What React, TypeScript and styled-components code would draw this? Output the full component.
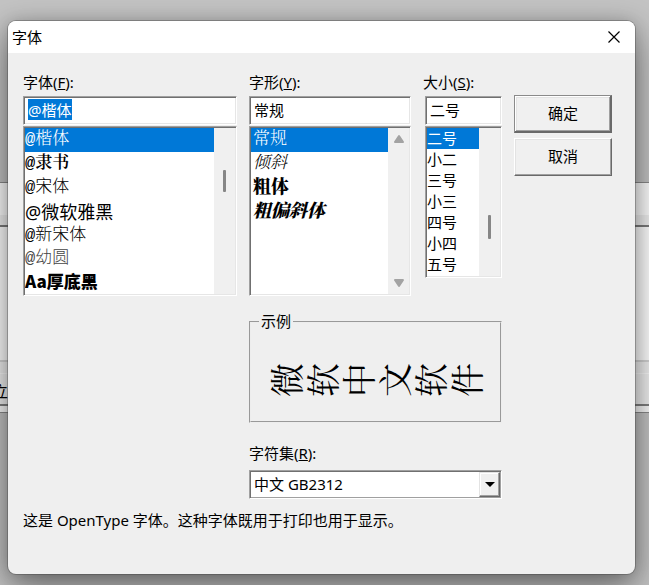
import React, { useEffect, useRef, useState } from "react";
import styled, { createGlobalStyle, css } from "styled-components";

const uiFont = `"Noto Sans", "Noto Sans CJK SC", sans-serif`;
const serifFont = `"Liberation Mono", "Noto Serif CJK SC", "Noto Sans CJK SC", serif`;
const narrowFont = `"Liberation Mono", "Noto Sans CJK SC", sans-serif`;

const GlobalStyle = createGlobalStyle`
  *, *::before, *::after { box-sizing: border-box; }
  body { margin: 0; font: 15px/21px ${uiFont}; color: #000; }
  button, input, select { font: inherit; color: inherit; }
  ul { list-style: none; margin: 0; padding: 0; }
`;

const sunken = css`
  border: 1px solid;
  border-color: #a0a0a0 #fff #fff #a0a0a0;
  box-shadow: inset 1px 1px #707070, inset -1px -1px #e6e6e6;
`;

const Desktop = styled.main`
  position: relative;
  min-height: 100vh;
  display: flex;
  padding: 21px 14px 11px 8px;
  overflow: hidden;
  background: #c3c3c3;
`;

const BackWindow = styled.div`
  position: absolute;
  left: -16px;
  right: -16px;
  top: 182px;
  height: 231px;
  display: flex;
  flex-direction: column;
  border: 1px solid #8a8a8a;
  background: #f0f0f0;
`;

const BackStrip = styled.div`
  height: 32px;
  background: #fdfdfd;
`;

const BackPane = styled.div`
  flex: 1;
  margin-top: 10px;
  border-top: 2px solid #7c7c7c;
  border-bottom: 2px solid #d4d4d4;
  background: #fff;
`;

const BackFooter = styled.div`
  height: 50px;
  padding: 19px 0 0 8px;
  background: linear-gradient(#f0f0f0 11px, #fafafa 11px, #fafafa 12px, #f0f0f0 12px, #f0f0f0 42px, #808080 42px, #808080 44px, #fafafa 44px);
`;

const Dialog = styled.section`
  position: relative;
  flex: 1;
  min-width: 0;
  display: flex;
  flex-direction: column;
  border-radius: 8px;
  overflow: hidden;
  background: #efefef;
  box-shadow: 0 0 0 1px rgba(60, 60, 60, 0.35), 0 0 16px rgba(0, 0, 0, 0.16), 0 14px 36px rgba(0, 0, 0, 0.46);
`;

const TitleBar = styled.header`
  display: flex;
  align-items: center;
  justify-content: space-between;
  height: 32px;
  padding: 0 12px 0 4px;
  background: #fff;
`;

const Title = styled.h1`
  margin: 0;
  font-size: 15px;
  font-weight: 400;
`;

const CloseButton = styled.button`
  display: grid;
  place-items: center;
  width: 18px;
  height: 18px;
  padding: 0;
  border: 0;
  background: none;
`;

const Body = styled.form`
  flex: 1;
  display: grid;
  grid-template-columns: minmax(0, 214fr) minmax(0, 162fr) minmax(0, 79fr) minmax(0, 98fr);
  column-gap: 12px;
  align-content: start;
  padding: 19px 23px 0 15px;
`;

const Column = styled.div`
  display: flex;
  flex-direction: column;
`;

const FieldLabel = styled.label`
  display: block;
  line-height: 21px;
  margin-bottom: 3px;
  white-space: nowrap;
`;

const Stack = styled.div<{ $inset?: boolean }>`
  display: flex;
  flex-direction: column;
  gap: 1px;
  margin-left: ${(p) => (p.$inset ? "2px" : "0")};
`;

const TextField = styled.input`
  width: 100%;
  height: 29px;
  padding: 0 4px 2px;
  line-height: 21px;
  border-radius: 0;
  outline: none;
  background: #fff;
  ${sunken}
  &::selection { background: #0078d7; color: #fff; }
`;

const ListFrame = styled.div<{ $height: number }>`
  display: flex;
  height: ${(p) => p.$height}px;
  padding: 1px;
  background: #fff;
  ${sunken}
`;

const Options = styled.ul`
  flex: 1;
  min-width: 0;
  overflow: hidden;
`;

type Face = "kai" | "li" | "song" | "hei" | "round" | "black" | "kaiItalic" | "kaiBold" | "kaiBoldItalic" | "plain";

const faces: Record<Face, ReturnType<typeof css>> = {
  plain: css`font-size: 15px; line-height: 21px;`,
  kai: css`font-family: ${serifFont}; font-size: 17px; line-height: 24px; font-weight: 300;`,
  li: css`font-family: ${serifFont}; font-size: 17px; line-height: 24px; font-weight: 600;`,
  song: css`font-family: ${narrowFont}; font-size: 17px; line-height: 24px; font-weight: 300;`,
  hei: css`font-size: 18px; line-height: 24px;`,
  round: css`font-family: ${narrowFont}; font-size: 17px; line-height: 22px; font-weight: 300; color: #444;`,
  black: css`font-family: "Noto Sans CJK SC", sans-serif; font-size: 17px; line-height: 22px; font-weight: 900;`,
  kaiItalic: css`font-family: ${serifFont}; font-size: 17px; line-height: 24px; font-weight: 300; font-style: italic;`,
  kaiBold: css`font-family: ${serifFont}; font-size: 18px; line-height: 24px; font-weight: 900;`,
  kaiBoldItalic: css`font-family: ${serifFont}; font-size: 18px; line-height: 24px; font-weight: 900; font-style: italic;`,
};

const Option = styled.li<{ $face: Face; $indent?: boolean }>`
  padding-left: ${(p) => (p.$indent ? "2px" : "0")};
  white-space: nowrap;
  cursor: default;
  ${(p) => faces[p.$face]}
  &[aria-selected="true"] {
    background: #0078d7;
    color: #fff;
  }
`;

const ScrollTrack = styled.div<{ $top?: number }>`
  width: 21px;
  display: flex;
  flex-direction: column;
  align-items: center;
  justify-content: space-between;
  padding: ${(p) => (p.$top === undefined ? "6px 0" : `${p.$top}px 0 0`)};
  background: #f0f0f0;
`;

const Thumb = styled.div<{ $length: number }>`
  width: 3px;
  height: ${(p) => p.$length}px;
  border-radius: 1px;
  background: #868686;
`;

const Actions = styled.div`
  display: flex;
  flex-direction: column;
  gap: 5px;
  padding-top: 23px;
`;

const PushButton = styled.button<{ $primary?: boolean }>`
  height: 38px;
  padding: 0 0 2px;
  border-radius: 0;
  background: #f0f0f0;
  ${(p) =>
    p.$primary
      ? css`
          border: 1px solid #696969;
          border-color: #8a8a8a #696969 #696969 #8a8a8a;
          box-shadow: inset -1px -1px #696969, inset 1px 1px #fff, inset -2px -2px #a0a0a0, inset 2px 2px #e3e3e3;
        `
      : css`
          border: 1px solid;
          border-color: #fff #696969 #696969 #fff;
          box-shadow: inset -1px -1px #a0a0a0, inset 1px 1px #e3e3e3;
        `}
`;

const Lower = styled.div`
  grid-column: 2 / 4;
  display: flex;
  flex-direction: column;
  padding-top: 15px;
`;

const SampleGroup = styled.fieldset`
  min-width: 0;
  height: 112px;
  margin: 0 0 20px;
  padding: 0 8px;
  border: 2px groove #ededed;
`;

const Legend = styled.legend`
  padding: 0 2px;
  line-height: 21px;
`;

const SampleText = styled.p`
  display: flex;
  justify-content: center;
  margin: 0;
  padding-top: 30px;
  font-family: "Noto Serif CJK SC", "Noto Sans CJK SC", serif;
  font-size: 34px;
  line-height: 36px;
  font-weight: 400;
`;

const TurnedGlyph = styled.span`
  display: block;
  width: 36px;
  height: 36px;
  text-align: center;
  transform: rotate(-90deg);
`;

const SelectFrame = styled.div`
  position: relative;
  height: 29px;
  margin-top: 3px;
  padding: 1px;
  background: #fff;
  border: 1px solid;
  border-color: #a0a0a0 #fff #fff #a0a0a0;
  box-shadow: inset 1px 1px #707070, inset -1px -1px #a0a0a0;
`;

const Select = styled.select`
  appearance: none;
  display: block;
  width: 100%;
  height: 25px;
  padding: 0 24px 0 3px;
  border: 0;
  border-radius: 0;
  outline: none;
  background: transparent;
`;

const SelectArrow = styled.span`
  position: absolute;
  top: 1px;
  right: 1px;
  bottom: 1px;
  width: 21px;
  display: grid;
  place-items: center;
  pointer-events: none;
  background: #f0f0f0;
  border: 1px solid;
  border-color: #e3e3e3 #696969 #696969 #e3e3e3;
  box-shadow: inset -1px -1px #a0a0a0, inset 1px 1px #fff;
`;

const Note = styled.p`
  grid-column: 1 / -1;
  margin: 11px 0 0;
`;

function ArrowGlyph({ up }: { up?: boolean }) {
  return (
    <svg width="12" height="10" viewBox="0 0 12 10" aria-hidden="true">
      <path
        d={up ? "M6 2 L10 8 H2 Z" : "M6 8 L10 2 H2 Z"}
        fill="#a3a3a3"
        stroke="#a3a3a3"
        strokeWidth="2"
        strokeLinejoin="round"
      />
    </svg>
  );
}

interface Item {
  text: string;
  face: Face;
}

interface PickerProps {
  id: string;
  caption: string;
  hotkey: string;
  items: Item[];
  height: number;
  thumb?: { top: number; length: number };
  inset?: boolean;
  indent?: boolean;
  highlight?: boolean;
}

function Picker({ id, caption, hotkey, items, height, thumb, inset, indent, highlight }: PickerProps) {
  const [value, setValue] = useState(items[0].text);
  const field = useRef<HTMLInputElement>(null);

  useEffect(() => {
    if (highlight) {
      field.current?.focus();
      field.current?.select();
    }
  }, [highlight]);

  return (
    <Column>
      <FieldLabel htmlFor={id}>
        {caption}(<u>{hotkey}</u>):
      </FieldLabel>
      <Stack $inset={inset}>
        <TextField ref={field} id={id} value={value} spellCheck={false} onChange={(e) => setValue(e.target.value)} />
        <ListFrame $height={height}>
          <Options role="listbox" aria-label={caption}>
            {items.map((item) => (
              <Option
                key={item.text}
                role="option"
                aria-selected={item.text === value}
                $face={item.face}
                $indent={indent}
                onClick={() => setValue(item.text)}
              >
                {item.text}
              </Option>
            ))}
          </Options>
          <ScrollTrack $top={thumb?.top}>
            {thumb ? (
              <Thumb $length={thumb.length} />
            ) : (
              <>
                <ArrowGlyph up />
                <ArrowGlyph />
              </>
            )}
          </ScrollTrack>
        </ListFrame>
      </Stack>
    </Column>
  );
}

const fonts: Item[] = [
  { text: "@楷体", face: "kai" },
  { text: "@隶书", face: "li" },
  { text: "@宋体", face: "song" },
  { text: "@微软雅黑", face: "hei" },
  { text: "@新宋体", face: "song" },
  { text: "@幼圆", face: "round" },
  { text: "Aa厚底黑", face: "black" },
];

const styles: Item[] = [
  { text: "常规", face: "kai" },
  { text: "倾斜", face: "kaiItalic" },
  { text: "粗体", face: "kaiBold" },
  { text: "粗偏斜体", face: "kaiBoldItalic" },
];

const sizes: Item[] = ["二号", "小二", "三号", "小三", "四号", "小四", "五号"].map((text) => ({
  text,
  face: "plain",
}));

export default function App() {
  return (
    <>
      <GlobalStyle />
      <Desktop>
        <BackWindow>
          <BackStrip />
          <BackPane />
          <BackFooter>立</BackFooter>
        </BackWindow>
        <Dialog role="dialog" aria-labelledby="dialog-title">
          <TitleBar>
            <Title id="dialog-title">字体</Title>
            <CloseButton type="button" aria-label="关闭">
              <svg width="14" height="14" viewBox="0 0 14 14" aria-hidden="true">
                <path d="M1.500 1.500 L12.500 12.500 M12.500 1.500 L1.500 12.500" stroke="#000" strokeWidth="1.200" />
              </svg>
            </CloseButton>
          </TitleBar>
          <Body onSubmit={(e) => e.preventDefault()}>
            <Picker
              id="font"
              caption="字体"
              hotkey="F"
              items={fonts}
              height={170}
              thumb={{ top: 42, length: 22 }}
              highlight
            />
            <Picker id="style" caption="字形" hotkey="Y" items={styles} height={170} indent />
            <Picker
              id="size"
              caption="大小"
              hotkey="S"
              items={sizes}
              height={152}
              thumb={{ top: 87, length: 24 }}
              inset
            />
            <Actions>
              <PushButton type="submit" $primary>
                确定
              </PushButton>
              <PushButton type="button">取消</PushButton>
            </Actions>
            <Lower>
              <SampleGroup>
                <Legend>示例</Legend>
                <SampleText>
                  {Array.from("微软中文软件").map((glyph, i) => (
                    <TurnedGlyph key={i}>{glyph}</TurnedGlyph>
                  ))}
                </SampleText>
              </SampleGroup>
              <FieldLabel htmlFor="charset">
                字符集(<u>R</u>):
              </FieldLabel>
              <SelectFrame>
                <Select id="charset" defaultValue="gb2312">
                  <option value="gb2312">中文 GB2312</option>
                </Select>
                <SelectArrow>
                  <svg width="10" height="6" viewBox="0 0 10 6" aria-hidden="true">
                    <path d="M0 0 H10 L5 5 Z" fill="#000" />
                  </svg>
                </SelectArrow>
              </SelectFrame>
            </Lower>
            <Note>这是 OpenType 字体。这种字体既用于打印也用于显示。</Note>
          </Body>
        </Dialog>
      </Desktop>
    </>
  );
}
